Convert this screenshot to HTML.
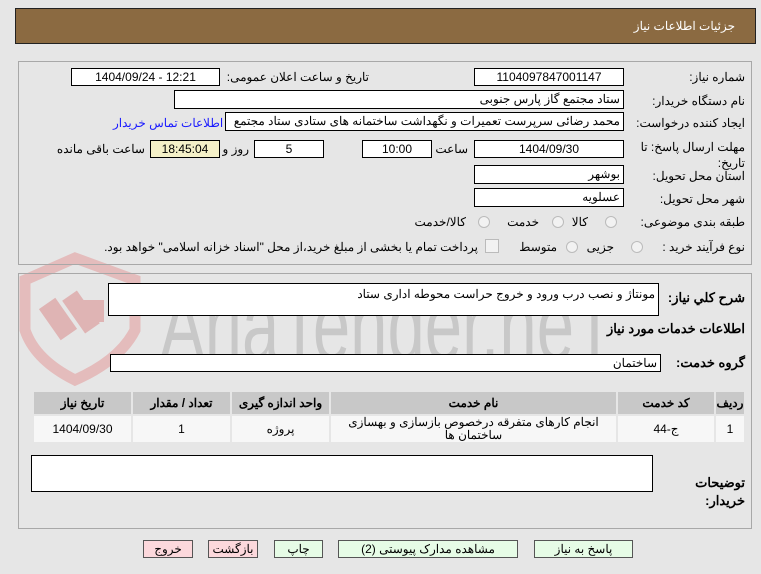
<!DOCTYPE html>
<html><head><meta charset="utf-8"><style>
body{margin:0;width:761px;height:574px;background:#e6e6e6;font-family:"Liberation Sans","Noto Sans CJK SC",sans-serif;font-size:12px;color:#000;position:relative;overflow:hidden}
.a{position:absolute}
.box{position:absolute;background:#fff;border:1px solid #000;box-sizing:border-box;font-size:12px;line-height:16px;text-align:center;white-space:nowrap;overflow:hidden}
.r{text-align:right;padding-right:3px}
.l{position:absolute;white-space:nowrap;direction:rtl;font-size:12px}
.panel{position:absolute;border:1px solid #a8a8a8;box-sizing:border-box}
.rad{position:absolute;width:12px;height:12px;border-radius:50%;border:1px solid #bbb;background:#f2f2f2;box-sizing:border-box}
.btn{position:absolute;border:1px solid #555;box-sizing:border-box;height:18px;line-height:16px;text-align:center;font-size:12px;background:#e6fce6}
table{border-collapse:collapse}
td{border:2px solid #e6e6e6;text-align:center;font-size:12px;padding:0}
</style></head><body>
<div class="a" style="left:15px;top:8px;width:741px;height:36px;background:#8b6a41;border:1px solid #222;box-sizing:border-box"></div>
<div class="l" style="right:26px;top:19px;color:#fff">جزئیات اطلاعات نیاز</div>

<svg class="a" style="left:0;top:240px" width="700" height="150">
<path d="M25 40 L75 18 L135 40 L135 90 Q120 120 75 140 Q35 120 25 90 Z" fill="none" stroke="#e4bcbc" stroke-width="11"/>
<rect x="48" y="60" width="20" height="38" fill="#dfb4b4" transform="rotate(-35 58 79)"/>
<rect x="72" y="52" width="18" height="40" fill="#dfb4b4" transform="rotate(-35 81 72)"/>
<rect x="82" y="60" width="22" height="22" fill="#dfb4b4"/>
<text x="160" y="120" font-family="Liberation Sans Narrow,Liberation Sans,sans-serif" font-size="100" fill="#c8c8c8" textLength="455" lengthAdjust="spacingAndGlyphs">AriaTender.neT</text>
</svg>

<div class="panel" style="left:18px;top:61px;width:734px;height:204px"></div>
<div class="l" style="right:16px;top:70px">شماره نیاز:</div>
<div class="box" style="left:474px;top:68px;width:150px;height:18px">1104097847001147</div>
<div class="l" style="right:392px;top:70px">تاریخ و ساعت اعلان عمومی:</div>
<div class="box" style="left:71px;top:68px;width:149px;height:18px">1404/09/24 - 12:21</div>

<div class="l" style="right:16px;top:94px">نام دستگاه خریدار:</div>
<div class="box r" style="left:174px;top:90px;width:450px;height:19px;direction:rtl">ستاد مجتمع گاز پارس جنوبی</div>

<div class="l" style="right:16px;top:116px">ایجاد کننده درخواست:</div>
<div class="box r" style="left:225px;top:112px;width:399px;height:19px;direction:rtl">محمد رضائی سرپرست تعمیرات و نگهداشت ساختمانه های ستادی ستاد مجتمع</div>
<div class="l" style="left:113px;top:116px;color:#1a1aff">اطلاعات تماس خریدار</div>

<div class="l" style="right:16px;top:139px;line-height:16px;text-align:right">مهلت ارسال پاسخ: تا<br>تاریخ:</div>
<div class="box" style="left:474px;top:140px;width:150px;height:18px">1404/09/30</div>
<div class="l" style="right:293px;top:142px">ساعت</div>
<div class="box" style="left:362px;top:140px;width:70px;height:18px">10:00</div>
<div class="box" style="left:254px;top:140px;width:70px;height:18px">5</div>
<div class="l" style="right:512px;top:142px">روز و</div>
<div class="box" style="left:150px;top:140px;width:70px;height:18px;background:#f4f0c8">18:45:04</div>
<div class="l" style="right:616px;top:142px">ساعت باقی مانده</div>

<div class="l" style="right:16px;top:169px">استان محل تحویل:</div>
<div class="box r" style="left:474px;top:165px;width:150px;height:19px">بوشهر</div>
<div class="l" style="right:16px;top:192px">شهر محل تحویل:</div>
<div class="box r" style="left:474px;top:188px;width:150px;height:19px">عسلویه</div>

<div class="l" style="right:16px;top:215px">طبقه بندی موضوعی:</div>
<div class="rad" style="left:605px;top:216px"></div><div class="l" style="right:173px;top:215px">کالا</div>
<div class="rad" style="left:552px;top:216px"></div><div class="l" style="right:222px;top:215px">خدمت</div>
<div class="rad" style="left:478px;top:216px"></div><div class="l" style="right:295px;top:215px">کالا/خدمت</div>

<div class="l" style="right:16px;top:240px">نوع فرآیند خرید :</div>
<div class="rad" style="left:631px;top:241px"></div><div class="l" style="right:147px;top:240px">جزیی</div>
<div class="rad" style="left:566px;top:241px"></div><div class="l" style="right:204px;top:240px">متوسط</div>
<div class="a" style="left:485px;top:239px;width:12px;height:12px;border:1px solid #bbb;background:#f2f2f2"></div>
<div class="l" style="right:283px;top:240px">پرداخت تمام یا بخشی از مبلغ خرید،از محل "اسناد خزانه اسلامی" خواهد بود.</div>

<div class="panel" style="left:18px;top:273px;width:734px;height:256px"></div>
<div class="l" style="right:16px;top:290px;font-weight:bold;font-size:13px">شرح کلي نياز:</div>
<div class="box r" style="left:108px;top:283px;width:551px;height:33px;direction:rtl;text-align:right;line-height:20px">مونتاژ و نصب درب ورود و خروج حراست محوطه اداری ستاد</div>
<div class="l" style="right:16px;top:321px;font-weight:bold;font-size:13px">اطلاعات خدمات مورد نياز</div>
<div class="l" style="right:16px;top:355px;font-weight:bold;font-size:13px">گروه خدمت:</div>
<div class="box r" style="left:110px;top:354px;width:551px;height:18px;direction:rtl">ساختمان</div>

<table class="a" style="left:32px;top:390px;width:714px;background:#f0f0f0;border:1px solid #ccc" dir="rtl">
<tr style="background:#c8c8c8;height:24px;font-weight:bold"><td style="width:28px"><b>ردیف</b></td><td style="width:96px"><b>کد خدمت</b></td><td style="width:285px"><b>نام خدمت</b></td><td style="width:97px"><b>واحد اندازه گیری</b></td><td style="width:97px"><b>تعداد / مقدار</b></td><td><b>تاریخ نیاز</b></td></tr>
<tr style="background:#f7f7f7;height:28px"><td>1</td><td>ج-44</td><td style="line-height:13px">انجام کارهای متفرقه درخصوص بازسازی و بهسازی ساختمان ها</td><td>پروژه</td><td>1</td><td>1404/09/30</td></tr>
</table>

<div class="l" style="right:16px;top:474px;font-weight:bold;font-size:13px;line-height:18px;text-align:right">توضیحات<br>خریدار:</div>
<div class="box" style="left:31px;top:455px;width:622px;height:37px"></div>

<div class="btn" style="left:534px;top:540px;width:99px">پاسخ به نیاز</div>
<div class="btn" style="left:338px;top:540px;width:180px">مشاهده مدارک پیوستی (2)</div>
<div class="btn" style="left:274px;top:540px;width:49px">چاپ</div>
<div class="btn" style="left:208px;top:540px;width:50px;background:#fcd8dc">بازگشت</div>
<div class="btn" style="left:143px;top:540px;width:50px;background:#fcd8dc">خروج</div>
</body></html>
